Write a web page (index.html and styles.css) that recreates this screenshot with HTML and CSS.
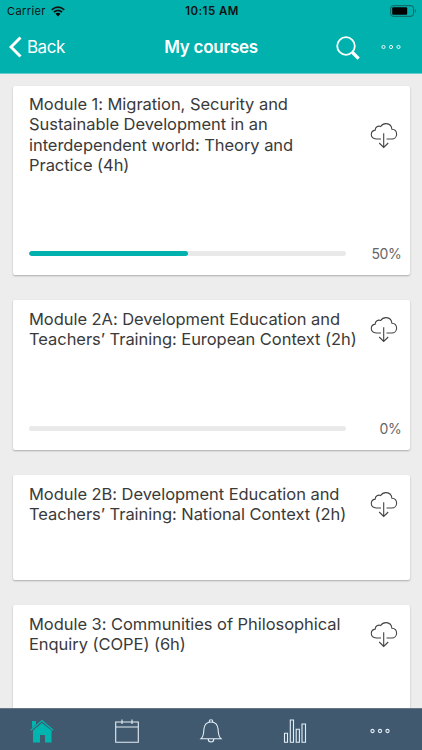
FILE: index.html
```html
<!DOCTYPE html>
<html lang="en">
<head>
<meta charset="utf-8">
<title>My courses</title>
<link rel="stylesheet" href="styles.css">
</head>
<body>
<svg class="defs" width="0" height="0" aria-hidden="true">
  <symbol id="cloud" viewBox="0 0 28 28">
    <path d="M11 18H6.200C3 18 1.300 16 1.300 13.500C1.300 11 3 9.400 5.200 9.100C5.200 6.200 8 4.400 10.700 5.500C12.200 3.200 14 2.500 16.200 2.600C19.500 2.800 21.700 5.100 21.900 8.300C25 8.500 26.600 10.800 26.600 13.200C26.600 16 24.500 18 21.800 18H16.500M13.700 12.300V26.300M9.200 22L13.700 26.400L18.200 22"/>
  </symbol>
  <symbol id="dots" viewBox="0 0 20 6">
    <circle cx="2.500" cy="3" r="1.600"/><circle cx="10" cy="3" r="1.600"/><circle cx="17.500" cy="3" r="1.600"/>
  </symbol>
</svg>
<div class="app">
  <header class="header">
    <div class="status">
      <div class="carrier"><span>Carrier</span>
        <svg width="14" height="11" viewBox="0 0 14 11"><path class="wifi" d="M.7 3.800Q7-1.600 13.300 3.800M2.900 6.200Q7 2.700 11.100 6.200"/><path d="M4.500 7.800Q7 5.900 9.500 7.800L7 10.500Z"/></svg>
      </div>
      <div class="time">10:15 AM</div>
      <div class="battery"><svg width="27" height="12" viewBox="0 0 27 12"><rect class="case" x=".7" y=".7" width="22.800" height="10.600" rx="2.500"/><rect x="2.200" y="2.200" width="15" height="7.600" rx="1"/><path class="tip" d="M24.800 4Q27 6 24.800 8Z"/></svg></div>
    </div>
    <div class="nav">
      <div class="back"><svg width="13" height="22" viewBox="0 0 13 22"><path d="M11.500 1.500L2 11L11.500 20.500"/></svg><span>Back</span></div>
      <h1>My courses</h1>
      <div class="actions">
        <svg width="24" height="24" viewBox="0 0 24 24"><circle cx="10" cy="10" r="8.800"/><path class="handle" d="M16.500 16.500L22.700 22.700"/></svg>
        <svg class="dots" width="20" height="6"><use href="#dots"/></svg>
      </div>
    </div>
  </header>
  <main class="list">
    <section class="card c1">
      <div class="top"><h2><span>Module 1: Migration, Security and</span><span>Sustainable Development in an</span><span>interdependent world: Theory and</span><span>Practice (4h)</span></h2><svg class="cloud" width="28" height="28"><use href="#cloud"/></svg></div>
      <div class="progress"><div class="track"><div class="fill" style="width:50%"></div></div><span>50%</span></div>
    </section>
    <section class="card c2">
      <div class="top"><h2><span>Module 2A: Development Education and</span><span>Teachers’ Training: European Context (2h)</span></h2><svg class="cloud" width="28" height="28"><use href="#cloud"/></svg></div>
      <div class="progress"><div class="track"></div><span>0%</span></div>
    </section>
    <section class="card c3">
      <div class="top"><h2><span>Module 2B: Development Education and</span><span>Teachers’ Training: National Context (2h)</span></h2><svg class="cloud" width="28" height="28"><use href="#cloud"/></svg></div>
    </section>
    <section class="card c4">
      <div class="top"><h2><span>Module 3: Communities of Philosophical</span><span>Enquiry (COPE) (6h)</span></h2><svg class="cloud" width="28" height="28"><use href="#cloud"/></svg></div>
    </section>
  </main>
  <nav class="tabs">
    <div><svg class="home" width="24" height="24" viewBox="0 0 24 24"><path d="M2 2H6V5.500L2 9Z"/><path d="M3 11.500L12 4L21.500 11.500V23.500H15V16H10V23.500H3Z"/><path class="roof" d="M.8 11.200L12 1.500L23.200 11.200"/></svg></div>
    <div><svg width="24" height="24" viewBox="0 0 24 24"><path d="M.7 3H23.300V23.300H.7ZM.7 8H23.300M7 .5V5M17 .5V5"/></svg></div>
    <div><svg width="24" height="24" viewBox="0 0 24 24"><path d="M2 19.700C5 17.200 4.500 13.500 5 9.500C5.500 5.600 8 3 12 3S18.500 5.600 19 9.500C19.500 13.500 19 17.200 22 19.700ZM10.300 3V2.200Q10.300.8 12 .8T13.700 2.200V3M9.200 20C9.200 24 14.800 24 14.800 20"/></svg></div>
    <div><svg width="24" height="24" viewBox="0 0 24 24"><path d="M1.500 14.200H4.500V23.300H1.500ZM7.300 1H10.500V23.300H7.300ZM13.200 10.300H16.400V23.300H13.200ZM19 5H22.500V23.300H19Z"/></svg></div>
    <div><svg class="dots" width="20" height="6"><use href="#dots"/></svg></div>
  </nav>
</div>
</body>
</html>
```
FILE: styles.css
```css
* { box-sizing: border-box; }
body { margin: 0; font-family: Inter, "Liberation Sans", sans-serif; }
svg { display: block; flex: none; }
.defs { position: absolute; }
.app { width: 422px; height: 750px; overflow: hidden; display: flex; flex-direction: column; background: #ededed; }
.header { flex: none; height: 74px; background: #00b1ae; border-bottom: 1px solid #65cdcb; }
.status { height: 22px; display: grid; grid-template-columns: 1fr auto 1fr; align-items: center; padding: 0 5px 0 7px; font-size: 11px; color: #111; }
.carrier { display: flex; align-items: center; gap: 5px; letter-spacing: .4px; }
.wifi { fill: none; stroke: #111; stroke-width: 1.7; }
.time { font-size: 11.5px; font-weight: 600; letter-spacing: .45px; }
.battery { justify-self: end; }
.case { fill: none; stroke: #12605e; stroke-width: 1; }
.tip { fill: #12605e; }
.nav { height: 50px; display: grid; grid-template-columns: 1fr auto 1fr; align-items: center; padding: 0 9px; color: #fff; }
.back { display: flex; align-items: center; gap: 5px; font-size: 17px; letter-spacing: -.5px; }
.back path { fill: none; stroke: #fff; stroke-width: 3; }
h1 { margin: 0; font-size: 17px; font-weight: 600; letter-spacing: -.25px; }
.actions { display: flex; justify-content: flex-end; align-items: center; gap: 21px; padding-right: 12px; fill: none; stroke: #fff; stroke-width: 1.8; }
.actions svg:first-child { margin-top: 2px; }
.actions .handle { stroke-width: 3.2; }
.dots { fill: none; stroke: #e5f8f8; stroke-width: 1; }
.list { flex: 1; min-height: 0; overflow: hidden; padding: 12px 12.5px 0; display: flex; flex-direction: column; gap: 25px; }
.card { flex: none; background: #fff; border-radius: 2px; box-shadow: 0 1px 2px rgba(0,0,0,.28); padding: 9px 12px 0 16.5px; display: flex; flex-direction: column; }
.c1 { height: 189px; padding-top: 8px; }
.c2 { height: 150px; }
.c3 { height: 105px; }
.c4 { height: 145px; }
.top { display: flex; justify-content: space-between; align-items: center; }
h2 { margin: 0; font-size: 16.5px; line-height: 20.4px; font-weight: 400; color: #3a3a3a; white-space: nowrap; width: 328px; letter-spacing: -.05px; }
h2 span { display: block; width: max-content; }
.cloud { fill: none; stroke: #444; stroke-width: 1.1; }
.progress { margin-top: auto; height: 43px; display: flex; justify-content: space-between; align-items: center; font-size: 14px; color: #666; }
.progress span { margin-right: -4px; letter-spacing: -.35px; }
.track { width: 317px; height: 5px; border-radius: 3px; background: #e9e9e9; overflow: hidden; }
.fill { height: 5px; border-radius: 3px; background: #00b1ae; }
.tabs { flex: none; height: 42px; background: #40596f; border-top: 1px solid #677686; display: grid; grid-template-columns: repeat(5, 1fr); align-items: center; justify-items: center; padding-top: 3px; }
.tabs svg { fill: none; stroke: #e3eef6; stroke-width: 1.1; }
.tabs .home { fill: #00b5b0; stroke: none; }
.tabs .home .roof { fill: none; stroke: #00b5b0; stroke-width: 1.2; }
```
